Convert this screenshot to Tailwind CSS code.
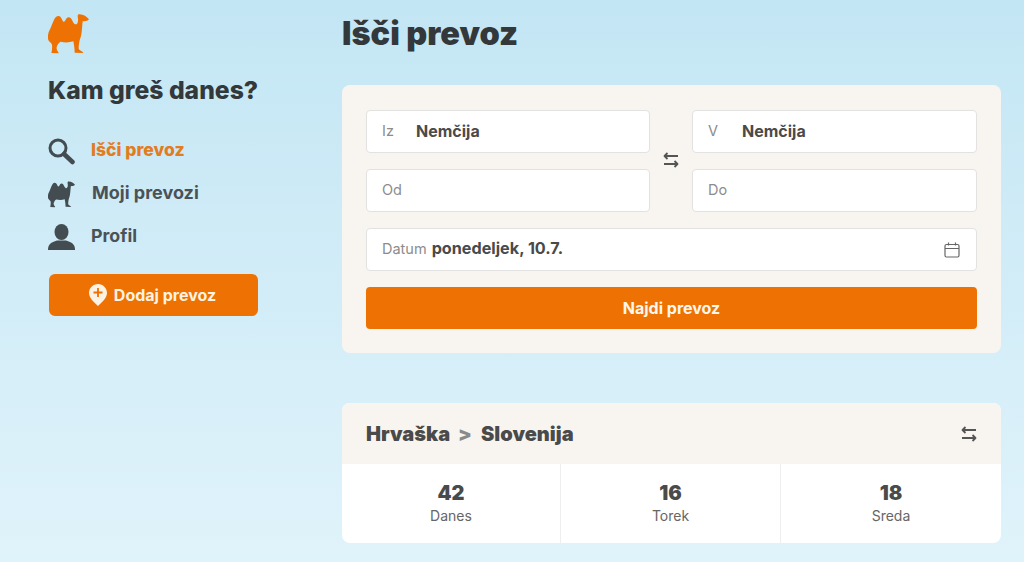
<!DOCTYPE html>
<html lang="en">
<head>
  <meta charset="UTF-8" />
  <meta name="viewport" content="width=device-width, initial-scale=1.0" />
  <title>Išči prevoz</title>
  <script src="https://cdn.jsdelivr.net/npm/@tailwindcss/browser@4"></script>
</head>
<body class="h-[562px] overflow-hidden bg-gradient-to-b from-[#c3e6f4] to-[#e0f3fb] font-['Inter',sans-serif] text-[#4a4a4a]">
  <div class="flex">
    <!-- Sidebar -->
    <aside class="w-[342px] shrink-0 pl-12 pt-[14px]">
      <svg class="block h-[40px] w-[41px] text-[#ee7203]" viewBox="12 13 123 118" fill="currentColor">
        <path d="M135 28 C128 20 118 12 104 13 C100 15 101 20 102 26 C103 36 100 44 93 43 C85 38 84 22 74 22 C64 23 66 36 58 35 C52 28 52 17 42 18 C30 20 26 42 18 58 C12 68 10 80 13 90 C15 96 22 98 24 104 C25 114 24 122 22 129 L44 130 C46 126 36 122 38 112 C40 104 44 98 50 95 C62 98 76 98 88 94 C90 104 92 116 92 128 L118 129 C118 124 106 122 104 116 C104 104 106 92 110 82 C114 70 114 50 116 34 C122 34 130 34 135 28 Z"/>
      </svg>
      <h2 class="mt-[21px] text-[24.7px] leading-[30px] font-extrabold text-[#33383b]">Kam greš danes?</h2>

      <nav class="mt-[31px] flex flex-col gap-[13px]">
        <a class="flex h-[30px] items-center gap-4 text-[17.5px] font-extrabold text-[#e27c1f]">
          <svg class="h-[27px] w-[27px] text-[#434c50]" viewBox="0 0 27 27" fill="none" stroke="currentColor">
            <circle cx="10" cy="10" r="8" stroke-width="3"/>
            <path d="M16 16 L24.5 24" stroke-width="4.500" stroke-linecap="round"/>
          </svg>
          <span class="-mt-[2px]">Išči prevoz</span>
        </a>
        <a class="flex h-[30px] items-center gap-[17px] text-lg font-bold text-[#4a5257]">
          <svg class="h-[27px] w-[27px] text-[#434c50]" viewBox="12 13 123 118" fill="currentColor">
            <path d="M135 28 C128 20 118 12 104 13 C100 15 101 20 102 26 C103 36 100 44 93 43 C85 38 84 22 74 22 C64 23 66 36 58 35 C52 28 52 17 42 18 C30 20 26 42 18 58 C12 68 10 80 13 90 C15 96 22 98 24 104 C25 114 24 122 22 129 L44 130 C46 126 36 122 38 112 C40 104 44 98 50 95 C62 98 76 98 88 94 C90 104 92 116 92 128 L118 129 C118 124 106 122 104 116 C104 104 106 92 110 82 C114 70 114 50 116 34 C122 34 130 34 135 28 Z"/>
          </svg>
          <span class="-mt-[2px]">Moji prevozi</span>
        </a>
        <a class="flex h-[30px] items-center gap-4 text-[17.8px] font-bold text-[#4a5257]">
          <svg class="h-[27px] w-[27px] text-[#434c50]" viewBox="0 0 27 27" fill="currentColor">
            <ellipse cx="13.5" cy="8" rx="7" ry="8"/>
            <path d="M0 26 C0 20 3 18.500 9 16.500 L18 16.500 C24 18.500 27 20 27 26 Z"/>
          </svg>
          <span class="-mt-[2px]">Profil</span>
        </a>
      </nav>

      <button class="mt-[22px] ml-px flex h-[42px] w-[209px] items-center justify-center gap-2 rounded-md bg-[#ee7203] pr-[2px] text-base font-bold text-[#fdf3e4]">
        <svg class="h-[22px] w-[18px]" viewBox="0 0 18 22">
          <path fill="#fdf3e4" d="M9 0 C14 0 18 4 18 9 C18 14 13 18 9 22 C5 18 0 14 0 9 C0 4 4 0 9 0 Z"/>
          <path stroke="#ee7203" stroke-width="1.800" d="M9 4 V13 M4.500 8.500 H13.500"/>
        </svg>
        <span class="-ml-[1px]">Dodaj prevoz</span>
      </button>
    </aside>

    <!-- Main -->
    <main class="w-[659px] shrink-0">
      <h1 class="mt-[14px] h-[71px] text-[32.5px] leading-[40px] font-black text-[#33383b]">Išči prevoz</h1>

      <section class="h-[268px] rounded-lg bg-[#f8f5f1] px-6 pt-[25px]">
        <div class="flex items-center">
          <div class="flex w-[284px] flex-col gap-4">
            <div class="flex h-[43px] items-center rounded border border-[#e2e2e2] bg-white pb-[2px] pl-[15px] text-[14.5px]">
              <span class="w-[34px] text-[#8c8c8c]">Iz</span>
              <span class="text-base font-bold">Nemčija</span>
            </div>
            <div class="flex h-[43px] items-center rounded border border-[#e2e2e2] bg-white pb-[2px] pl-[15px] text-[14.5px] text-[#8c8c8c]">Od</div>
          </div>
          <div class="flex flex-1 justify-center">
            <svg class="-mt-[2px] h-4 w-4 text-[#555]" viewBox="0 0 16 16" fill="none" stroke="currentColor" stroke-width="1.800" stroke-linejoin="round">
              <path d="M15 4 H1.500 M4.500 1 L1.500 4 L4.500 7"/>
              <path d="M1 12 H14.500 M11.500 9 L14.500 12 L11.500 15"/>
            </svg>
          </div>
          <div class="flex w-[285px] flex-col gap-4">
            <div class="flex h-[43px] items-center rounded border border-[#e2e2e2] bg-white pb-[2px] pl-[15px] text-[14.5px]">
              <span class="w-[34px] text-[#8c8c8c]">V</span>
              <span class="text-base font-bold">Nemčija</span>
            </div>
            <div class="flex h-[43px] items-center rounded border border-[#e2e2e2] bg-white pb-[2px] pl-[15px] text-[14.5px] text-[#8c8c8c]">Do</div>
          </div>
        </div>

        <div class="mt-4 flex h-[43px] items-center rounded border border-[#e2e2e2] bg-white pr-4 pl-[15px] text-[14.5px]">
          <span class="mr-[5px] -mt-[2px] text-[#8c8c8c]">Datum</span>
          <span class="-mt-[2px] text-[16.2px] font-bold">ponedeljek, 10.7.</span>
          <svg class="ml-auto h-4 w-4 text-[#666]" viewBox="0 0 16 16" fill="none" stroke="currentColor" stroke-width="1.200">
            <rect x="1" y="2.500" width="14" height="12.500" rx="1.500"/>
            <path d="M1 6.500 H15 M4.500 0.500 V3.500 M11.500 0.500 V3.500"/>
          </svg>
        </div>

        <button class="mt-4 h-[42px] w-full rounded bg-[#ee7203] text-base font-bold text-[#fdf6ec]">Najdi prevoz</button>
      </section>

      <section class="mt-[50px] h-[140px] overflow-hidden rounded-lg bg-white">
        <div class="flex h-[61px] items-center justify-between bg-[#f8f5f1] px-6">
          <div class="flex items-center text-xl font-black">
            <span>Hrvaška</span>
            <span class="mx-2 text-[#8a8a8a]">&gt;</span>
            <span class="ml-[1px]">Slovenija</span>
          </div>
          <svg class="h-4 w-4 text-[#555]" viewBox="0 0 16 16" fill="none" stroke="currentColor" stroke-width="1.800" stroke-linejoin="round">
            <path d="M15 4 H1.500 M4.500 1 L1.500 4 L4.500 7"/>
            <path d="M1 12 H14.500 M11.500 9 L14.500 12 L11.500 15"/>
          </svg>
        </div>
        <div class="grid h-[79px] grid-cols-[219px_220px_220px] divide-x divide-[#eeeeee] text-center">
          <div class="pt-[17px]">
            <div class="text-xl leading-6 font-black">42</div>
            <div class="text-sm leading-[21px] text-[#666]">Danes</div>
          </div>
          <div class="pt-[17px]">
            <div class="text-xl leading-6 font-black">16</div>
            <div class="text-sm leading-[21px] text-[#666]">Torek</div>
          </div>
          <div class="pt-[17px]">
            <div class="text-xl leading-6 font-black">18</div>
            <div class="text-sm leading-[21px] text-[#666]">Sreda</div>
          </div>
        </div>
      </section>
    </main>
  </div>
</body>
</html>
